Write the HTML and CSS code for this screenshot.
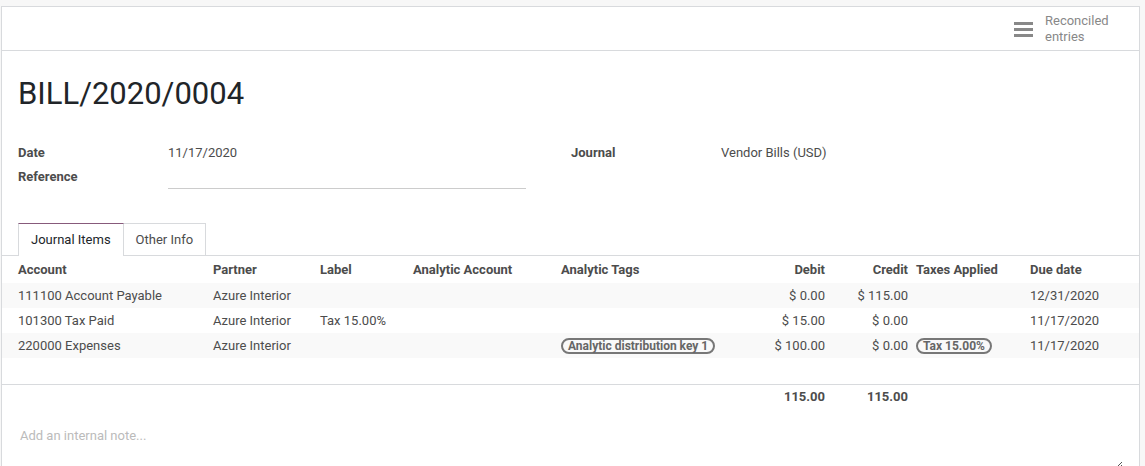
FILE: index.html
```html
<!DOCTYPE html>
<html>
<head>
<meta charset="utf-8">
<link rel="stylesheet" href="styles.css">
</head>
<body>
<div class="page">
  <div class="sheet">
    <div class="button-box">
      <div class="stat-button">
        <svg class="stat-icon" width="20" height="16" viewBox="0 0 20 16">
          <rect x="0" y="1" width="19" height="3" fill="#888"/>
          <rect x="0" y="7" width="19" height="3" fill="#888"/>
          <rect x="0" y="13" width="19" height="3" fill="#888"/>
        </svg>
        <div class="stat-text">Reconciled<br>entries</div>
      </div>
    </div>
    <h1 class="title">BILL/2020/0004</h1>
    <div class="fields">
      <div class="group">
        <div class="label">Date</div><div class="value">11/17/2020</div>
        <div class="label">Reference</div><div class="value input"></div>
      </div>
      <div class="group group-right">
        <div class="label">Journal</div><div class="value">Vendor Bills (USD)</div>
      </div>
    </div>
    <div class="tabs">
      <div class="tab active">Journal Items</div>
      <div class="tab">Other Info</div>
    </div>
    <table class="lines">
      <colgroup>
        <col class="c-account"><col class="c-partner"><col class="c-label"><col class="c-aa"><col class="c-tags"><col class="c-debit"><col class="c-credit"><col class="c-tax"><col class="c-due">
      </colgroup>
      <thead>
        <tr>
          <th>Account</th>
          <th>Partner</th>
          <th>Label</th>
          <th>Analytic Account</th>
          <th>Analytic Tags</th>
          <th class="num">Debit</th>
          <th class="num">Credit</th>
          <th>Taxes Applied</th>
          <th>Due date</th>
        </tr>
      </thead>
      <tbody>
        <tr class="odd">
          <td>111100 Account Payable</td><td>Azure Interior</td><td></td><td></td><td></td>
          <td class="num">$ 0.00</td><td class="num">$ 115.00</td><td></td><td>12/31/2020</td>
        </tr>
        <tr>
          <td>101300 Tax Paid</td><td>Azure Interior</td><td>Tax 15.00%</td><td></td><td></td>
          <td class="num">$ 15.00</td><td class="num">$ 0.00</td><td></td><td>11/17/2020</td>
        </tr>
        <tr class="odd">
          <td>220000 Expenses</td><td>Azure Interior</td><td></td><td></td>
          <td><span class="badge">Analytic distribution key 1</span></td>
          <td class="num">$ 100.00</td><td class="num">$ 0.00</td>
          <td><span class="badge">Tax 15.00%</span></td><td>11/17/2020</td>
        </tr>
        <tr class="empty"><td colspan="9"></td></tr>
      </tbody>
      <tfoot>
        <tr>
          <td></td><td></td><td></td><td></td><td></td>
          <td class="num total">115.00</td><td class="num total">115.00</td><td></td><td></td>
        </tr>
      </tfoot>
    </table>
    <div class="note">
      <div class="placeholder">Add an internal note...</div>
      <svg class="resize" width="6" height="6" viewBox="0 0 6 6">
        <line x1="1" y1="5" x2="5" y2="1" stroke="#555" stroke-width="1"/>
        <line x1="4" y1="5" x2="5" y2="4" stroke="#555" stroke-width="1"/>
      </svg>
    </div>
  </div>
</div>
</body>
</html>
```
FILE: styles.css
```css
html, body {
  margin: 0;
  padding: 0;
  background: #f7f7f7;
  font-family: Roboto, "Liberation Sans", sans-serif;
  font-size: 13px;
  color: #4c4c4c;
}
.page {
  padding: 6px 5px 0 1px;
  height: 460px;
  overflow: hidden;
}
.sheet {
  background: #fff;
  border: 1px solid #d8dadd;
  border-bottom: none;
  height: 480px;
  box-sizing: border-box;
}
.button-box {
  height: 43px;
  border-bottom: 1px solid #d8dadd;
  display: flex;
  justify-content: flex-end;
}
.stat-button {
  display: flex;
  align-items: center;
  width: 124px;
  margin-right: 14px;
  padding-left: 13px;
  box-sizing: border-box;
  color: #888;
}
.stat-icon {
  margin-right: 11px;
  margin-top: 1px;
}
.stat-text {
  line-height: 16px;
  font-size: 13px;
  margin-top: 1px;
}
.title {
  margin: 23px 0 0 16px;
  font-size: 31px;
  font-weight: 400;
  line-height: 40px;
  color: #212529;
}
.fields {
  display: flex;
  margin-top: 26px;
  padding-left: 16px;
}
.group {
  display: grid;
  grid-template-columns: 150px 358px;
  grid-auto-rows: 24px;
  align-items: center;
}
.group-right {
  margin-left: 45px;
  grid-template-columns: 150px 300px;
}
.label {
  font-weight: 700;
  color: #4c4c4c;
}
.value {
  color: #4c4c4c;
}
.input {
  align-self: end;
  height: 12px;
  border-bottom: 1px solid #ccc;
  margin-bottom: -1px;
}
.tabs {
  display: flex;
  margin-top: 35px;
  padding-left: 16px;
  border-bottom: 1px solid #d8dadd;
}
.tab {
  height: 31px;
  line-height: 31px;
  padding: 0 12px;
  border: 1px solid #d8dadd;
  border-bottom: none;
  color: #4c4c4c;
  margin-bottom: -1px;
}
.tab.active {
  border-top: 1px solid #875a7b;
  color: #212529;
  background: #fff;
  height: 32px;
  padding: 0 12px;
}
.tab + .tab {
  border-left: none;
}
.lines {
  width: 1137px;
  table-layout: fixed;
  border-collapse: collapse;
}
.c-account { width: 207px; }
.c-partner { width: 107px; }
.c-label { width: 93px; }
.c-aa { width: 148px; }
.c-tags { width: 212px; }
.c-debit { width: 60px; }
.c-credit { width: 83px; }
.c-tax { width: 114px; }
.c-due { width: 113px; }
.lines th {
  text-align: left;
  font-weight: 700;
  height: 27px;
  padding: 0 4px;
  color: #4c4c4c;
  white-space: nowrap;
}
.lines thead tr {
  box-shadow: 0 4px 6px -3px rgba(0,0,0,0.06);
}
.lines td {
  height: 25px;
  padding: 0 4px;
  white-space: nowrap;
}
.lines th:first-child, .lines td:first-child {
  padding-left: 16px;
}
.lines tr.odd td {
  background: #f9f9f9;
}
.lines th.num, .lines td.num {
  text-align: right;
}
.lines tr.empty td {
  height: 26px;
  padding: 0;
  background: #fff;
  border-bottom: 1px solid #d8dadd;
}
.lines tfoot td {
  height: 23px;
}
.total {
  font-weight: 700;
  color: #4c4c4c;
}
.badge {
  display: inline-block;
  border: 2px solid #777;
  border-radius: 10px;
  padding: 0 5px;
  font-size: 12px;
  font-weight: 700;
  line-height: 12px;
  color: #666;
}
.note {
  position: relative;
  margin-top: 20px;
  height: 60px;
  padding-left: 18px;
}
.placeholder {
  color: #bbb;
}
.resize {
  position: absolute;
  right: 16px;
  top: 33px;
}
```
